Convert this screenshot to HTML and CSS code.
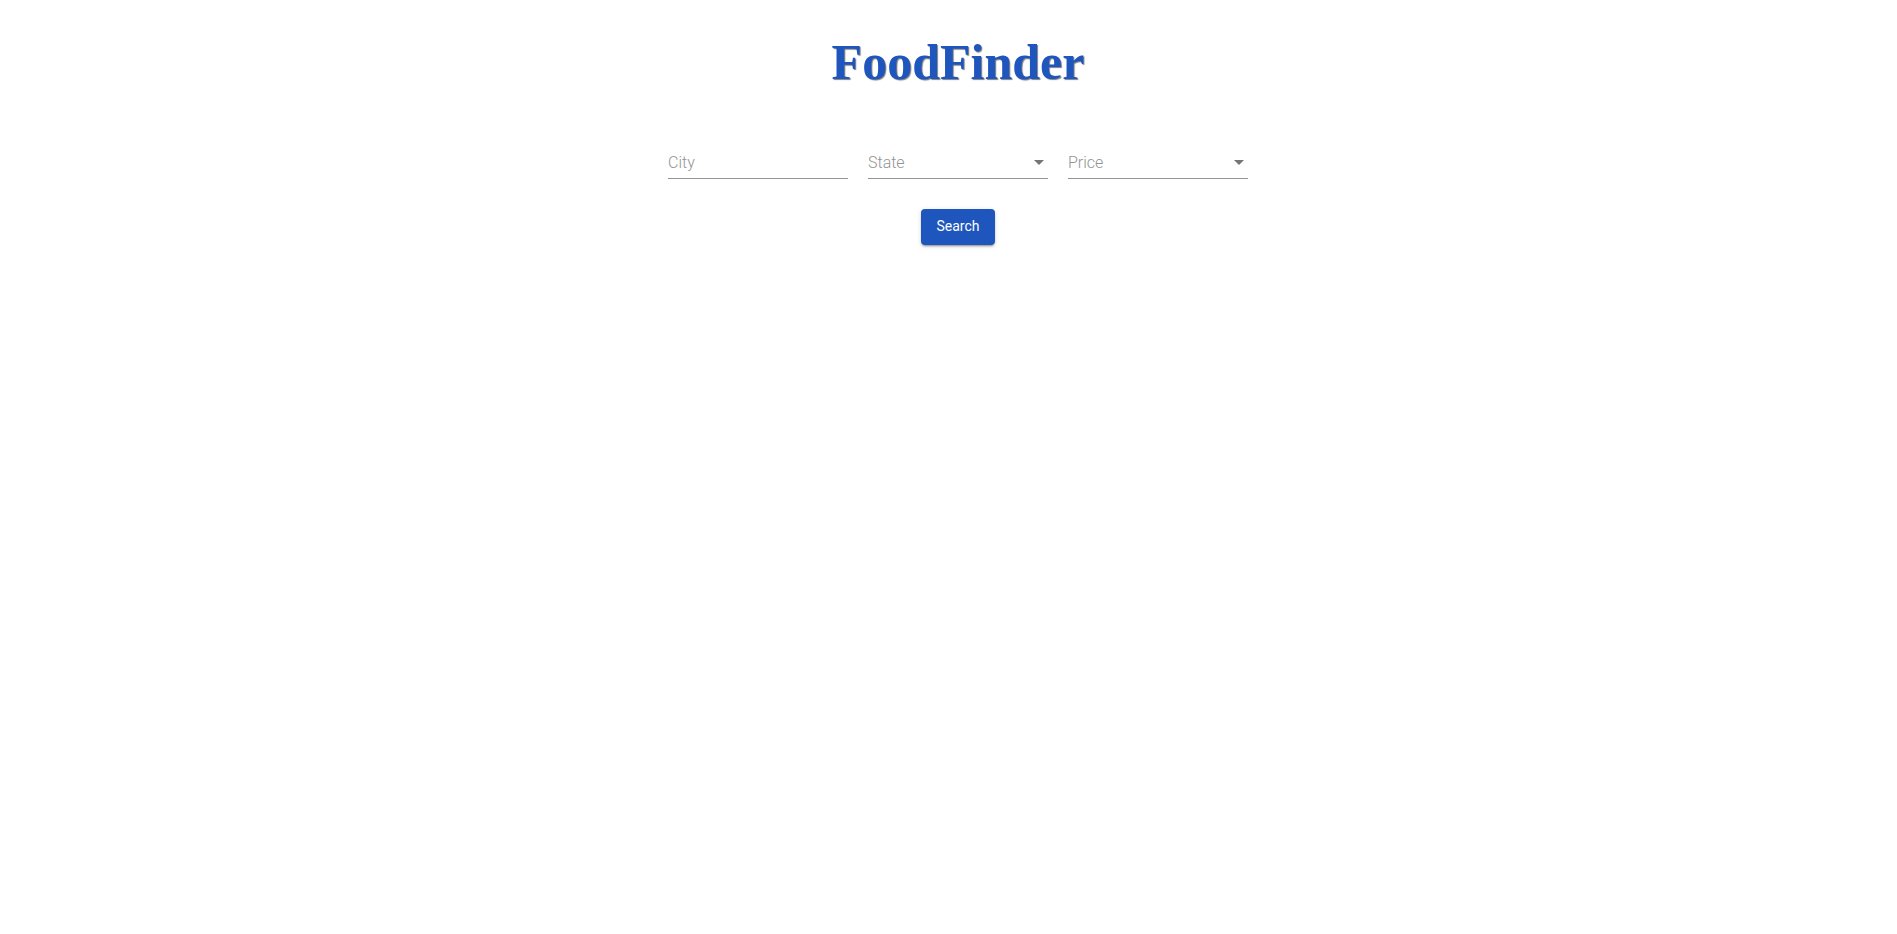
FILE: index.html
```html
<!DOCTYPE html>
<html lang="en">
<head>
<meta charset="utf-8">
<title>FoodFinder</title>
<link rel="stylesheet" href="styles.css">
</head>
<body>
<main class="page">
  <h1 class="title">FoodFinder</h1>
  <form class="search">
    <div class="fields">
      <input class="field" type="text" placeholder="City" aria-label="City">
      <div class="select">
        <select class="field" aria-label="State"><option>State</option></select>
        <svg class="arrow" viewBox="0 0 10 5" aria-hidden="true"><path d="M0 0h10L5 5z"/></svg>
      </div>
      <div class="select">
        <select class="field" aria-label="Price"><option>Price</option></select>
        <svg class="arrow" viewBox="0 0 10 5" aria-hidden="true"><path d="M0 0h10L5 5z"/></svg>
      </div>
    </div>
    <button class="button" type="button">Search</button>
  </form>
</main>
</body>
</html>
```
FILE: styles.css
```css
body {
  margin: 0;
  background: #fff;
  font-family: Roboto, sans-serif;
}

.page {
  padding: 33px 0 20px 19px;
}

.title {
  margin: 0;
  color: #1e56be;
  font: bold 50px/58px "Liberation Serif", serif;
  text-align: center;
  text-shadow: 1px 1px 1px gray;
}

.search {
  display: flex;
  flex-direction: column;
  align-items: center;
  gap: 30px;
  margin-top: 55px;
}

.fields {
  display: flex;
  flex-wrap: wrap;
  justify-content: center;
  gap: 20px;
}

.field {
  box-sizing: border-box;
  width: 180px;
  height: 33px;
  margin: 0;
  padding: 1px 0 0;
  border: 0;
  border-bottom: 1px solid #949494;
  border-radius: 0;
  outline: 0;
  appearance: none;
  background: none;
  color: #949494;
  font: 300 16px/24px Roboto, sans-serif;
}

.field::placeholder {
  color: #949494;
  opacity: 1;
}

.select {
  display: flex;
  position: relative;
}

.arrow {
  position: absolute;
  top: 14px;
  right: 4px;
  width: 10px;
  height: 5px;
  fill: #757575;
  pointer-events: none;
}

.button {
  height: 36px;
  padding: 0 15px 1px;
  border: 0;
  border-radius: 4px;
  background: #1e56be;
  box-shadow: 0 3px 1px -2px rgba(0, 0, 0, 0.2), 0 2px 2px 0 rgba(0, 0, 0, 0.14), 0 1px 5px 0 rgba(0, 0, 0, 0.12);
  color: #fff;
  font: 400 14px/35px Roboto, sans-serif;
}
```
